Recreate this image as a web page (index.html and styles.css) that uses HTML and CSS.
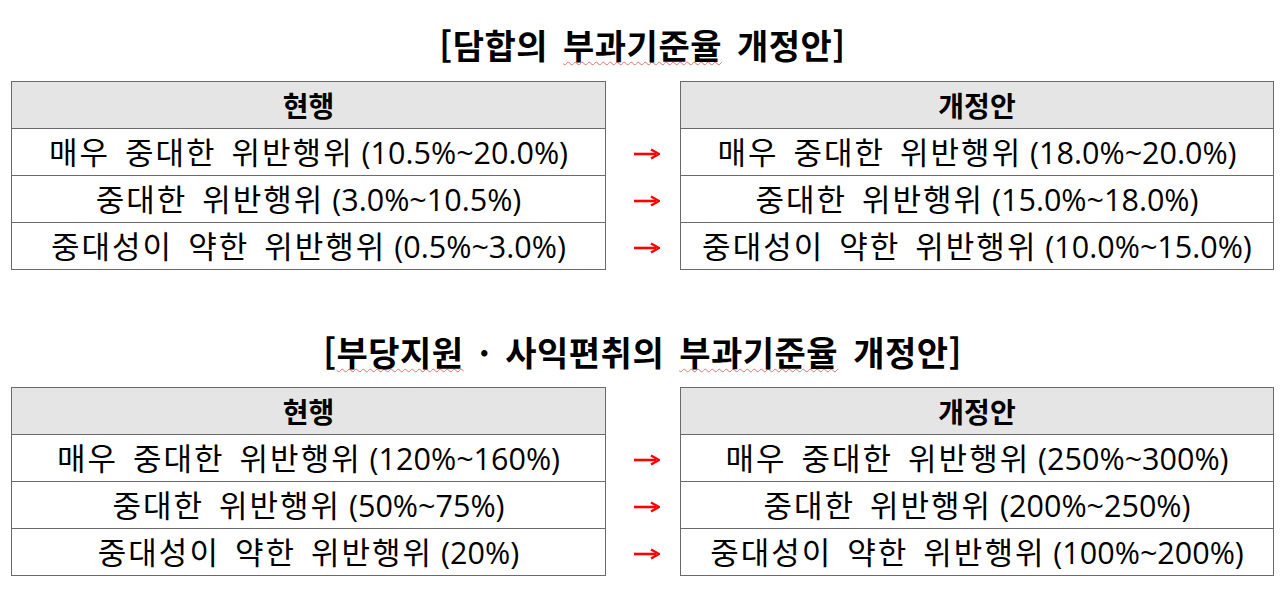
FILE: index.html
```html
<!DOCTYPE html>
<html lang="ko">
<head>
<meta charset="utf-8">
<title>부과기준율 개정안</title>
<link rel="stylesheet" href="styles.css">
</head>
<body>
<section class="block first">
  <h2 class="title">[담합의 <span class="spell">부과기준율</span> 개정안]</h2>
  <table class="grid">
    <tr class="head"><th>현행</th><td class="arrow"></td><th>개정안</th></tr>
    <tr><td>매우 중대한 위반행위<span class="num"> (10.5%~20.0%)</span></td><td class="arrow"><svg viewBox="0 0 26 12" width="26" height="12"><path d="M0 6H22" stroke="#f00" stroke-width="2.6"/><path d="M17 1.5L25 6L17 10.5" fill="none" stroke="#f00" stroke-width="2.4"/></svg></td><td>매우 중대한 위반행위<span class="num"> (18.0%~20.0%)</span></td></tr>
    <tr><td>중대한 위반행위<span class="num"> (3.0%~10.5%)</span></td><td class="arrow"><svg viewBox="0 0 26 12" width="26" height="12"><path d="M0 6H22" stroke="#f00" stroke-width="2.6"/><path d="M17 1.5L25 6L17 10.5" fill="none" stroke="#f00" stroke-width="2.4"/></svg></td><td>중대한 위반행위<span class="num"> (15.0%~18.0%)</span></td></tr>
    <tr><td>중대성이 약한 위반행위<span class="num"> (0.5%~3.0%)</span></td><td class="arrow"><svg viewBox="0 0 26 12" width="26" height="12"><path d="M0 6H22" stroke="#f00" stroke-width="2.6"/><path d="M17 1.5L25 6L17 10.5" fill="none" stroke="#f00" stroke-width="2.4"/></svg></td><td>중대성이 약한 위반행위<span class="num"> (10.0%~15.0%)</span></td></tr>
  </table>
</section>
<section class="block second">
  <h2 class="title">[<span class="spell">부당지원</span> · 사익편취의 <span class="spell">부과기준율</span> 개정안]</h2>
  <table class="grid">
    <tr class="head"><th>현행</th><td class="arrow"></td><th>개정안</th></tr>
    <tr><td>매우 중대한 위반행위<span class="num"> (120%~160%)</span></td><td class="arrow"><svg viewBox="0 0 26 12" width="26" height="12"><path d="M0 6H22" stroke="#f00" stroke-width="2.6"/><path d="M17 1.5L25 6L17 10.5" fill="none" stroke="#f00" stroke-width="2.4"/></svg></td><td>매우 중대한 위반행위<span class="num"> (250%~300%)</span></td></tr>
    <tr><td>중대한 위반행위<span class="num"> (50%~75%)</span></td><td class="arrow"><svg viewBox="0 0 26 12" width="26" height="12"><path d="M0 6H22" stroke="#f00" stroke-width="2.6"/><path d="M17 1.5L25 6L17 10.5" fill="none" stroke="#f00" stroke-width="2.4"/></svg></td><td>중대한 위반행위<span class="num"> (200%~250%)</span></td></tr>
    <tr><td>중대성이 약한 위반행위<span class="num"> (20%)</span></td><td class="arrow"><svg viewBox="0 0 26 12" width="26" height="12"><path d="M0 6H22" stroke="#f00" stroke-width="2.6"/><path d="M17 1.5L25 6L17 10.5" fill="none" stroke="#f00" stroke-width="2.4"/></svg></td><td>중대성이 약한 위반행위<span class="num"> (100%~200%)</span></td></tr>
  </table>
</section>
</body>
</html>
```

FILE: styles.css
```css
html, body {
  margin: 0;
  padding: 0;
  background: #fff;
}
body {
  font-family: "Open Sans", "Noto Sans CJK KR", sans-serif;
  color: #000;
  padding: 0 6px 0 11px;
}
.block.first {
  padding-top: 25px;
}
.block.second {
  padding-top: 62px;
}
.title {
  margin: 0 0 16px;
  text-align: center;
  font-family: "Noto Sans CJK KR", sans-serif;
  font-size: 34px;
  font-weight: 700;
  line-height: 40px;
  height: 40px;
  word-spacing: 5px;
  letter-spacing: 0.5px;
}
.block.second .title {
  margin-bottom: 15px;
}
.spell {
  text-decoration: underline wavy #e07070;
  text-decoration-thickness: 1px;
  text-underline-offset: 2px;
}
.grid {
  border-collapse: collapse;
  table-layout: fixed;
  width: 1263px;
}
.grid th, .grid td {
  border: 1.4px solid #6a6a6a;
  height: 46px;
  padding: 0;
  text-align: center;
  vertical-align: middle;
  font-size: 31px;
  line-height: 32px;
  word-spacing: 5px;
  letter-spacing: 2px;
  white-space: nowrap;
}
.grid th {
  background: #e5e5e5;
  font-weight: 700;
  font-family: "Noto Sans CJK KR", sans-serif;
  font-size: 28px;
  letter-spacing: 0;
  word-spacing: 0;
}
.grid tr > :first-child { width: 593px; }
.grid tr > :nth-child(2) { width: 74px; }
.grid .arrow {
  border: none;
  background: #fff;
}
.grid .arrow svg {
  display: block;
  margin: 3px auto 0 28px;
}
.num {
  font-size: 30.5px;
  word-spacing: 0;
  letter-spacing: 0;
}
```
